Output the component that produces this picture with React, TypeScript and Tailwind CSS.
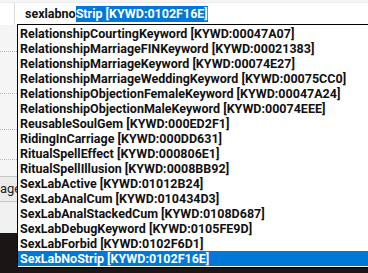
const items = [
  "RelationshipCourtingKeyword [KYWD:00047A07]",
  "RelationshipMarriageFINKeyword [KYWD:00021383]",
  "RelationshipMarriageKeyword [KYWD:00074E27]",
  "RelationshipMarriageWeddingKeyword [KYWD:00075CC0]",
  "RelationshipObjectionFemaleKeyword [KYWD:00047A24]",
  "RelationshipObjectionMaleKeyword [KYWD:00074EEE]",
  "ReusableSoulGem [KYWD:000ED2F1]",
  "RidingInCarriage [KYWD:000DD631]",
  "RitualSpellEffect [KYWD:000806E1]",
  "RitualSpellIllusion [KYWD:0008BB92]",
  "SexLabActive [KYWD:01012B24]",
  "SexLabAnalCum [KYWD:010434D3]",
  "SexLabAnalStackedCum [KYWD:0108D687]",
  "SexLabDebugKeyword [KYWD:0105FE9D]",
  "SexLabForbid [KYWD:0102F6D1]",
  "SexLabNoStrip [KYWD:0102F16E]",
]

export default function App() {
  return (
    <div
      className="relative w-[368px] h-[273px] overflow-hidden bg-[#1c1515]"
      style={{ fontFamily: 'Roboto, "Open Sans", sans-serif' }}
    >
      {/* background form behind the dropdown */}
      <div className="flex flex-col h-[233px] bg-[#f5f5f5]">
        <div className="flex h-[23px] bg-white border-t border-[#ececec] mt-[2px]">
          <div className="w-[15px] border-r border-[#dcdcdc]" />
          <div className="flex items-center pl-[10px] text-[12.5px] font-bold text-[#111] leading-none">
            <span>sexlabno</span>
            <span className="bg-[#0078d7] text-white py-[2px]">Strip [KYWD:0102F16E]</span>
          </div>
        </div>
        <div className="flex flex-col">
          {[27, 42, 36, 30].map((h, i) => (
            <div key={i} className="w-[17px] border-b border-dotted border-[#b8b8b8]" style={{ height: h }} />
          ))}
        </div>
        <div className="h-[17px] border-b border-[#c8c8c8]" />
        <div className="h-[25px] flex items-center bg-[#ebebeb] border-b border-[#c8c8c8]">
          <div className="w-[17px] overflow-hidden text-[13px] text-[#222] whitespace-nowrap">
            <span className="block -ml-[15px]">Image</span>
          </div>
        </div>
        <div className="flex-1 bg-[#f0f0f0]" />
      </div>

      {/* dropdown list */}
      <div className="absolute left-[17px] top-[24px] w-[360px] h-[244px] bg-white border border-black pt-[1px]">
        {items.map((t, i) => (
          <div
            key={t}
            className={
              "h-[15px] pl-[2px] text-[12.5px] font-bold leading-[15px] whitespace-nowrap " +
              (i === items.length - 1 ? "bg-[#0078d7] text-white" : "text-[#111]")
            }
          >
            {t}
          </div>
        ))}
      </div>
    </div>
  )
}
